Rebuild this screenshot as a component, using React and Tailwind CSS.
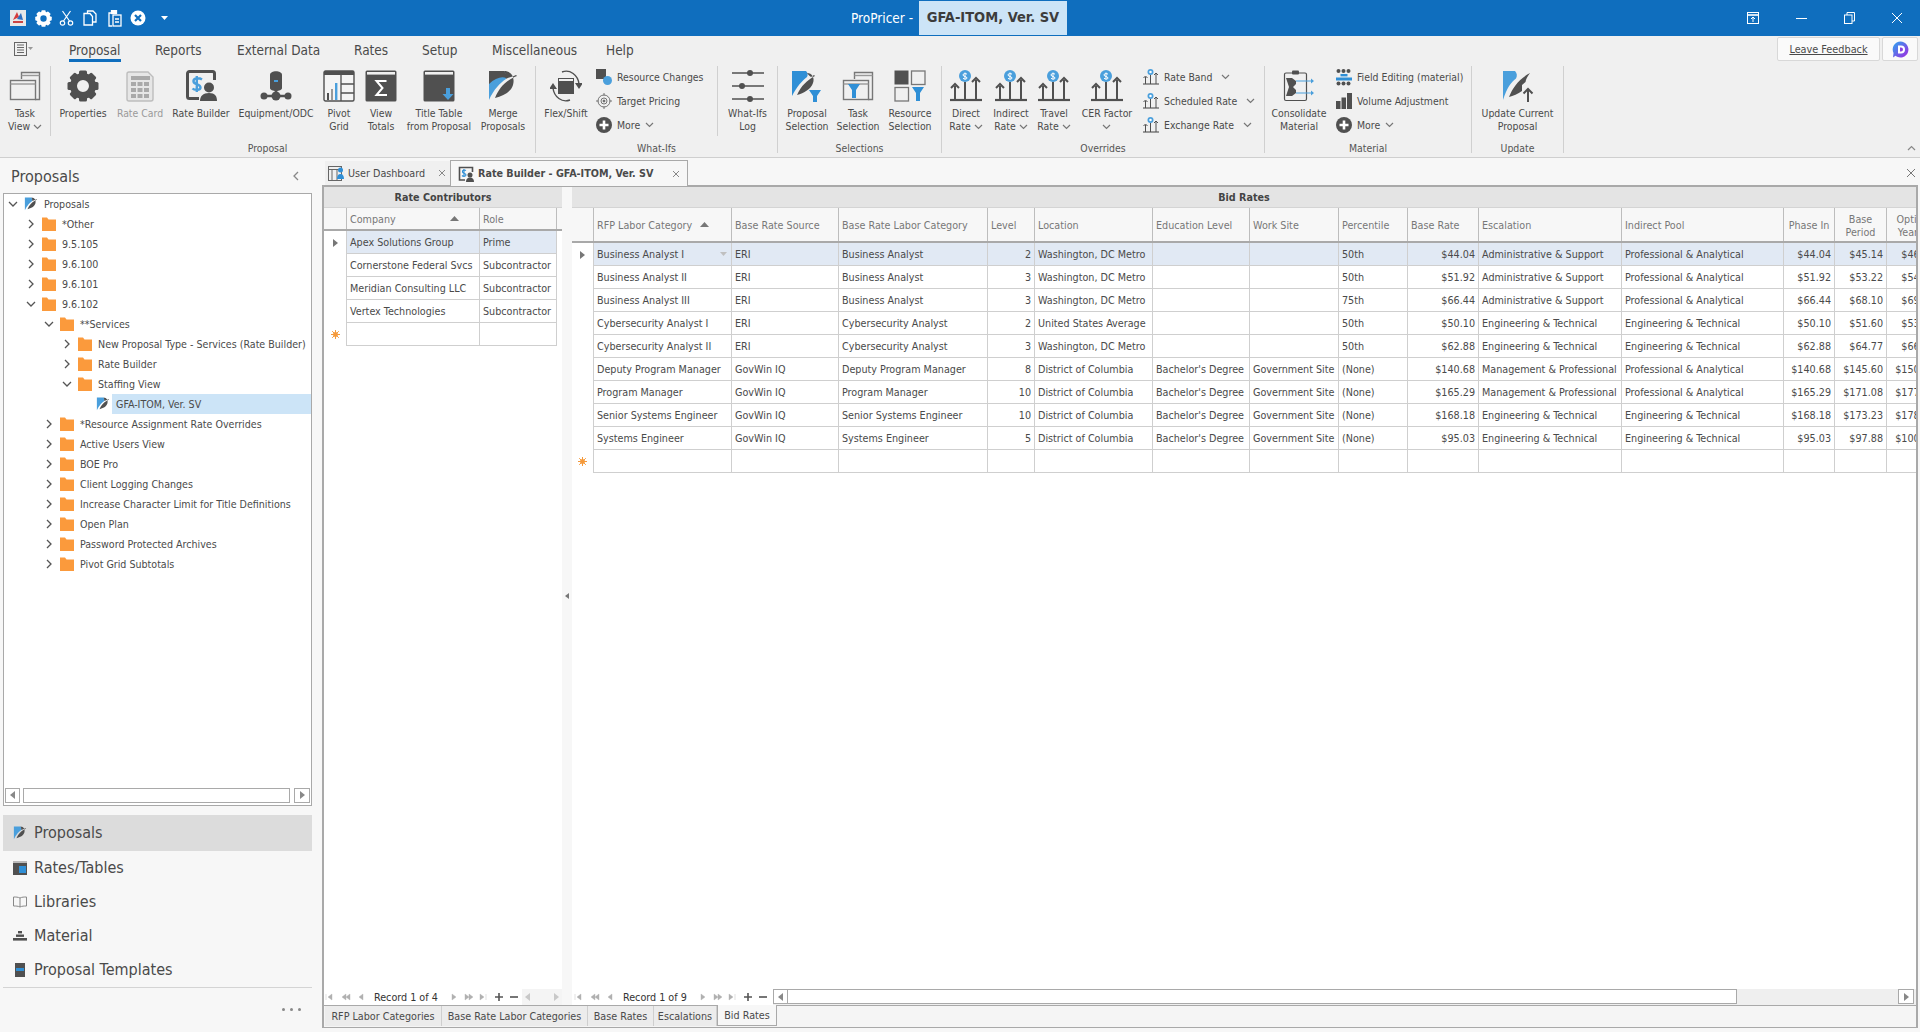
const DARK = "#505050";
const BLUE = "#4a9fdc";

function Gear({ size = 32, color = DARK }) {
  const teeth = [0, 45, 90, 135, 180, 225, 270, 315];
  return (
    <svg width={size} height={size} viewBox="0 0 32 32">
      {teeth.map((a) => (
        <rect key={a} x="12" y="0.5" width="8" height="7" rx="1.5" fill={color} transform={`rotate(${a} 16 16)`} />
      ))}
      <circle cx="16" cy="16" r="9.5" fill="none" stroke={color} strokeWidth="7" />
    </svg>
  );
}

function Feather({ size = 32, dark = false }) {
  return (
    <svg width={size} height={size} viewBox="0 0 32 32">
      <path d="M2 1H17C19 4 20 6 19 9C13 13 7 19 2 30Z" fill={BLUE} />
      {dark && <path d="M2 1H17C19 4 20 5 19 8C15 6 8 8 2 14Z" fill={DARK} />}
      <path d="M8 28C12 18 18 11 30 6L29 5C22 8 20 8 19 9C19 4 18 3 17 1C25 1 28 8 26 15C24 22 16 26 8 28Z" fill={DARK} />
    </svg>
  );
}

function Funnel({ x = 20, y = 18 }) {
  return <path d={`M${x} ${y}h12l-4 6v8h-4v-8z`} fill="#2f8fd6" />;
}

function Windows({ children }) {
  return (
    <svg width="32" height="32" viewBox="0 0 32 32">
      <path d="M12.5 9V2.5H30.5V29.5H26" fill="none" stroke="#777" strokeWidth="1.4" />
      <path d="M12.5 5.5H30.5" stroke="#999" strokeWidth="1.4" />
      <rect x="1.5" y="10.5" width="25" height="19" fill="#f0f0f0" stroke="#777" strokeWidth="1.4" />
      <path d="M1.5 14H26.5" stroke="#999" strokeWidth="1.4" />
      {children}
    </svg>
  );
}

function RateCard() {
  const cells = [];
  for (let r = 0; r < 3; r++) for (let c = 0; c < 3; c++) cells.push(<rect key={`${r}${c}`} x={7 + c * 6.5} y={12 + r * 6} width="5" height="4" fill="#a9a9a9" />);
  return (
    <svg width="32" height="32" viewBox="0 0 32 32">
      <path d="M3 4a2 2 0 0 1 2-2H24l5 5V29a2 2 0 0 1-2 2H5a2 2 0 0 1-2-2Z" fill="#e6e6e6" stroke="#bdbdbd" strokeWidth="1.4" />
      <rect x="7" y="6" width="19" height="4" fill="#a9a9a9" />
      {cells}
    </svg>
  );
}

function RateBuilder() {
  return (
    <svg width="32" height="32" viewBox="0 0 32 32">
      <path d="M14 28.5H4.5a2 2 0 0 1-2-2V3.5a2 2 0 0 1 2-2H27.5a2 2 0 0 1 2 2V10" fill="none" stroke={DARK} strokeWidth="3" />
      <path d="M17 9.5C14 7.5 8 8 8.5 11.5C9 15 15.5 14 15.5 17.5C15.5 20.5 9.5 20.5 7.5 18.5M11.8 6V22" fill="none" stroke={BLUE} strokeWidth="2.4" />
      <circle cx="24" cy="17.5" r="5" fill={DARK} />
      <path d="M15 31c0-5 3-8 9-8s8 3 8 8z" fill={DARK} />
    </svg>
  );
}

function Equipment() {
  return (
    <svg width="32" height="32" viewBox="0 0 32 32">
      <path d="M10 5c0-5 12-5 12 0V18c0 4-12 4-12 0Z" fill={DARK} />
      <rect x="14" y="10" width="4" height="2" fill={BLUE} />
      <path d="M16 20V26M4 26H28" stroke={DARK} strokeWidth="2.4" />
      <circle cx="4" cy="26" r="3.5" fill={DARK} />
      <circle cx="16" cy="26" r="4.5" fill={DARK} />
      <circle cx="28" cy="26" r="3.5" fill={DARK} />
    </svg>
  );
}

function Pivot() {
  return (
    <svg width="32" height="32" viewBox="0 0 32 32">
      <rect x="1" y="1" width="30" height="30" rx="1.5" fill="#f4f4f4" stroke={DARK} strokeWidth="1.4" />
      <rect x="1" y="1" width="30" height="4" fill={DARK} />
      <path d="M18 5V31M18 14H31M18 23H31" stroke={DARK} strokeWidth="1.3" />
      <rect x="4" y="23" width="2" height="7" fill={DARK} />
      <rect x="8" y="19" width="2" height="11" fill="#999" />
      <rect x="12" y="13" width="2.4" height="17" fill={BLUE} />
    </svg>
  );
}

function Sigma() {
  return (
    <svg width="32" height="32" viewBox="0 0 32 32">
      <rect x="0.5" y="0.5" width="31" height="31" rx="1.5" fill={DARK} />
      <rect x="2" y="2" width="28" height="2.6" fill="#f0f0f0" />
      <path d="M21.5 11H11.5L17.5 18L11.5 25H22" fill="none" stroke="#fff" strokeWidth="2" />
    </svg>
  );
}

function TitleTable() {
  return (
    <svg width="32" height="32" viewBox="0 0 32 32">
      <rect x="0.5" y="0.5" width="31" height="31" rx="1.5" fill={DARK} />
      <rect x="2" y="2" width="28" height="2.6" fill="#f0f0f0" />
      <path d="M23 18h4v6h3.5l-5.5 6l-5.5-6H23z" fill={BLUE} />
    </svg>
  );
}

function FlexShift() {
  return (
    <svg width="32" height="32" viewBox="0 0 32 32">
      <rect x="8" y="8" width="16" height="16" fill={DARK} />
      <rect x="9" y="9" width="14" height="2" fill="#f0f0f0" />
      <path d="M12 2C20 -1 28 5 29 14M20 30C12 33 4 27 3 18" fill="none" stroke={DARK} strokeWidth="1.4" />
      <path d="M29 19l-4-6h8zM3 13l4 6h-8z" fill={DARK} />
    </svg>
  );
}

function SliderLog() {
  return (
    <svg width="32" height="32" viewBox="0 0 32 32">
      <path d="M0 3H32M0 16H32M0 29H32" stroke={DARK} strokeWidth="1.6" />
      <circle cx="18" cy="3" r="3" fill={DARK} />
      <circle cx="10" cy="16" r="3" fill={DARK} />
      <circle cx="18" cy="29" r="3" fill={DARK} />
    </svg>
  );
}

function FeatherFunnel() {
  return (
    <svg width="32" height="32" viewBox="0 0 32 32">
      <path d="M1 1H15C17 3 17 5 16 7C11 11 6 16 1 26Z" fill="#2f8fd6" />
      <path d="M6 25C10 16 16 10 24 6L23 5L20 7C18 6 17 4 16 3C21 3 24 8 22 13C20 19 13 23 6 25Z" fill={DARK} />
      <Funnel x={18} y={20} />
    </svg>
  );
}

function ResourceSel() {
  return (
    <svg width="32" height="32" viewBox="0 0 32 32">
      <rect x="0.5" y="0.5" width="14" height="14" fill={DARK} />
      <rect x="17.5" y="1" width="13.5" height="13.5" fill="none" stroke="#777" strokeWidth="1.3" />
      <rect x="1" y="17.5" width="13.5" height="13.5" fill="none" stroke="#777" strokeWidth="1.3" />
      <Funnel x={18} y={17} />
    </svg>
  );
}

function RateArrows({ size = 32, withDollar = true }) {
  return (
    <svg width={size} height={size} viewBox="0 0 32 32">
      <path d="M5 30V16M15 30V12M26 30V10" stroke={DARK} strokeWidth="2" />
      <path d="M1 18l4-4l4 4M22 12l4-4l4 4" fill="none" stroke={DARK} strokeWidth="2" />
      <path d="M0 30H32" stroke={DARK} strokeWidth="2.2" />
      <circle cx="15" cy="6" r="6" fill={BLUE} />
      {withDollar ? (
        <path d="M17 4.2C15.5 3 13 3.4 13 5C13 6.8 17 6.2 17 8C17 9.4 14.5 9.5 13 8.3M15 2.5V9.5" fill="none" stroke="#fff" strokeWidth="1" />
      ) : (
        <circle cx="15" cy="6" r="2.5" fill="#fff" />
      )}
    </svg>
  );
}

function Consolidate() {
  return (
    <svg width="32" height="32" viewBox="0 0 32 32">
      <path d="M10 3H3a1.5 1.5 0 0 0-1.5 1.5V29a1.5 1.5 0 0 0 1.5 1.5H22a1.5 1.5 0 0 0 1.5-1.5V4.5A1.5 1.5 0 0 0 22 3H15" fill="none" stroke={DARK} strokeWidth="1.2" />
      <rect x="9" y="0.5" width="7" height="4" rx="1" fill={DARK} />
      <path d="M3 8H9L13 11V14L10 17L13 20V23L9 26H3L6 17Z" fill={DARK} />
      <path d="M13 11H30M13 23H30" stroke={BLUE} strokeWidth="1.2" />
      <path d="M28 8.5l3 2.5l-3 2.5zM28 20.5l3 2.5l-3 2.5z" fill={BLUE} />
    </svg>
  );
}

function UpdateFeather() {
  return (
    <svg width="32" height="32" viewBox="0 0 32 32">
      <path d="M1 1H13C15 3 15.5 6 14 8.5C9 12 5 18 1 30Z" fill={BLUE} />
      <path d="M7 27C11 17 17 9 28 3C25 7 24 9 23.5 12L20 15V21C16 24 11 26 7 27Z" fill={DARK} />
      <path d="M26 32V19M21.5 23.5L26 19L30.5 23.5" fill="none" stroke={DARK} strokeWidth="2" />
    </svg>
  );
}

function BlockSquare() {
  return (
    <svg width="16" height="16" viewBox="0 0 16 16">
      <rect x="0" y="0" width="10" height="10" fill={DARK} />
      <circle cx="11.5" cy="11.5" r="4.5" fill={BLUE} />
    </svg>
  );
}

function TargetIcon() {
  return (
    <svg width="16" height="16" viewBox="0 0 16 16" fill="none" stroke="#666" strokeWidth="0.9">
      <circle cx="8" cy="8" r="6" />
      <circle cx="8" cy="8" r="3" />
      <circle cx="8" cy="8" r="1" fill="#666" />
      <path d="M8 0V2.5M8 13.5V16M0 8H2.5M13.5 8H16" />
    </svg>
  );
}

function MoreIcon() {
  return (
    <svg width="16" height="16" viewBox="0 0 16 16">
      <circle cx="8" cy="8" r="8" fill={DARK} />
      <path d="M8 3.5V12.5M3.5 8H12.5" stroke="#fff" strokeWidth="2.6" />
    </svg>
  );
}

function FieldEdit() {
  const dots = [1.5, 6.5, 11.5].flatMap((x) => [
    <circle key={`a${x}`} cx={x + 1} cy="2" r="2" fill={DARK} />,
    <circle key={`b${x}`} cx={x + 1} cy="14.5" r="2" fill={DARK} />,
  ]);
  return (
    <svg width="16" height="17" viewBox="0 0 16 17">
      {dots}
      <rect x="4.5" y="5" width="7" height="2.4" fill="#2f8fd6" />
      <rect x="0" y="8.5" width="16" height="3" fill="#2f8fd6" />
    </svg>
  );
}

function VolumeIcon() {
  return (
    <svg width="16" height="16" viewBox="0 0 16 16" fill={DARK}>
      <rect x="0" y="8" width="4.5" height="8" />
      <rect x="5.5" y="4.5" width="4.5" height="11.5" />
      <rect x="11" y="0" width="5" height="16" />
    </svg>
  );
}

function Caret({ className = "" }) {
  return (
    <svg width="9" height="6" viewBox="0 0 9 6" className={className}>
      <path d="M1 1l3.5 3.5L8 1" fill="none" stroke="#777" strokeWidth="1.2" />
    </svg>
  );
}

function BigButton({ w, icon, lines, caret }) {
  return (
    <div className={`${w} flex shrink-0 flex-col items-center pt-[8px]`}>
      <div className="flex h-[32px] items-center justify-center">{icon}</div>
      <div className="mt-[5px] text-center leading-[13px] whitespace-nowrap">
        {lines.map((l, i) => (
          <div key={l || i} className="flex h-[13px] items-center justify-center gap-[3px]">
            {l}
            {caret && i === lines.length - 1 && <Caret />}
          </div>
        ))}
      </div>
    </div>
  );
}

function SmallCol({ items, w }) {
  return (
    <div className={`${w} flex shrink-0 flex-col gap-[8px] pt-[7px]`}>
      {items.map((it) => (
        <div key={it.label} className="flex h-[16px] items-center whitespace-nowrap">
          <div className="flex w-[16px] shrink-0 items-center justify-center">{it.icon}</div>
          <span className={`${it.gap} pt-[2px]`}>{it.label}</span>
          {it.caret && <Caret className={it.caretGap} />}
        </div>
      ))}
    </div>
  );
}

function Group({ w, label, children }) {
  return (
    <div className={`${w} flex h-full shrink-0 flex-col`}>
      <div className="flex h-[80px] items-start">{children}</div>
      <div className="flex h-[14px] items-center justify-center text-[#555]">{label}</div>
    </div>
  );
}

const Sep = ({ short }) => <div className={`${short ? "h-[70px]" : "h-[87px]"} mt-[4px] w-px shrink-0 bg-[#d0d0d0]`} />;

const ribbonTabs = [
  ["Proposal", "w-[86px]"],
  ["Reports", "w-[82px]"],
  ["External Data", "w-[117px]"],
  ["Rates", "w-[68px]"],
  ["Setup", "w-[70px]"],
  ["Miscellaneous", "w-[114px]"],
  ["Help", "w-[50px]"],
];

function TitleBar() {
  return (
    <div className="flex h-[36px] shrink-0 items-center bg-[#0f6ebe] text-white">
      <div className="flex w-[851px] shrink-0 items-center">
        <svg width="16" height="16" viewBox="0 0 16 16" className="ml-[10px]">
          <rect width="16" height="16" fill="#e8e8e8" />
          <path d="M3 10L7 2L9 7Z" fill="#d63a3a" />
          <path d="M7 9L11 3L13 10Z" fill="#2f6fc0" />
          <rect x="3" y="11" width="10" height="2" fill="#c44" />
        </svg>
        <div className="ml-[9px]"><Gear size={17} color="#fff" /></div>
        <svg width="15" height="16" viewBox="0 0 15 16" className="ml-[7px]" fill="none" stroke="#fff" strokeWidth="1.2">
          <circle cx="3.5" cy="13" r="2.2" />
          <circle cx="11.5" cy="13" r="2.2" />
          <path d="M4.5 11L11.5 1M10.5 11L3.5 1" />
        </svg>
        <svg width="14" height="16" viewBox="0 0 14 16" className="ml-[9px]" fill="none" stroke="#fff" strokeWidth="1.3">
          <path d="M4.5 3V1H10l3 3V12H10" />
          <path d="M1 3.5H7l2.5 3V15H1Z" />
        </svg>
        <svg width="14" height="17" viewBox="0 0 14 17" className="ml-[11px]" fill="none" stroke="#fff" strokeWidth="1.3">
          <path d="M4 3H1V16H4" />
          <rect x="5" y="5" width="8" height="11" />
          <rect x="3.5" y="0.5" width="5" height="3" fill="#fff" />
          <path d="M7 9H11M7 12H11" />
        </svg>
        <svg width="16" height="16" viewBox="0 0 16 16" className="ml-[8px]">
          <circle cx="8" cy="8" r="7.5" fill="#fff" />
          <path d="M5 5L11 11M11 5L5 11" stroke="#0f6ebe" strokeWidth="2.2" />
        </svg>
        <svg width="7" height="4" viewBox="0 0 7 4" className="ml-[15px]"><path d="M0 0H7L3.5 4Z" fill="#fff" /></svg>
      </div>
      <span className="w-[68px] shrink-0 text-[13.5px]">ProPricer -</span>
      <div className="mt-[-1px] flex h-[34px] w-[148px] shrink-0 items-center justify-center whitespace-nowrap bg-[#cce4f7] text-[14.5px] font-bold text-[#3c3c3c]">
        GFA-ITOM, Ver. SV
      </div>
      <div className="ml-auto flex items-center">
        <div className="flex w-[48px] justify-center">
          <svg width="12" height="12" viewBox="0 0 12 12" fill="none" stroke="#fff" strokeWidth="1">
            <rect x="0.5" y="0.5" width="11" height="11" />
            <path d="M0.5 3H11.5" strokeWidth="1.6" />
            <path d="M6 10V5M4 7l2-2l2 2" />
          </svg>
        </div>
        <div className="flex w-[48px] justify-center"><div className="h-px w-[11px] bg-white" /></div>
        <div className="flex w-[48px] justify-center">
          <svg width="11" height="12" viewBox="0 0 11 12" fill="none" stroke="#fff" strokeWidth="1">
            <rect x="0.5" y="3" width="7.5" height="8.5" />
            <path d="M3 3V0.5H10.5V9H8" />
          </svg>
        </div>
        <div className="flex w-[47px] justify-center">
          <svg width="12" height="12" viewBox="0 0 12 12" stroke="#fff" strokeWidth="1"><path d="M1 1L11 11M11 1L1 11" /></svg>
        </div>
      </div>
    </div>
  );
}

function Ribbon() {
  return (
    <div className="h-[122px] shrink-0 border-b border-[#cfcfcf] bg-[#f0f0f0] text-[10.4px] text-[#4a4a4a]">
      <div className="flex h-[26px] items-center">
        <div className="flex w-[69px] shrink-0 justify-center pr-[22px]">
          <svg width="19" height="14" viewBox="0 0 19 14" fill="none" stroke="#666">
            <rect x="0.5" y="0.5" width="12" height="13" />
            <path d="M3 3H10M3 5.5H10M3 8H10M3 10.5H10" />
            <path d="M14 5H19L16.5 8Z" fill="#999" stroke="none" />
          </svg>
        </div>
        {ribbonTabs.map(([t, w], i) => (
          <div key={t} className={`${w} relative flex h-[26px] shrink-0 items-center pt-[2px] text-[13.5px] text-[#4a4a4a]`}>
            {t}
            {i === 0 && <div className="absolute bottom-0 left-0 h-[3px] w-[52px] bg-[#0f6ebe]" />}
          </div>
        ))}
        <div className="ml-auto mr-[2px] flex items-center gap-[2px]">
          <div className="flex h-[24px] w-[103px] items-center justify-center rounded-[2px] border border-[#d8d8d8] bg-[#fafafa] pt-[2px] text-[10.8px] underline">
            Leave Feedback
          </div>
          <div className="flex h-[24px] w-[36px] items-center justify-center rounded-[2px] border border-[#d8d8d8] bg-[#fafafa]">
            <svg width="17" height="17" viewBox="0 0 17 17">
              <defs>
                <linearGradient id="dlogo" x1="0" y1="0" x2="1" y2="1">
                  <stop offset="0" stopColor="#2aa8f0" />
                  <stop offset="1" stopColor="#a326e0" />
                </linearGradient>
              </defs>
              <path d="M8.5 0.5a8 8 0 1 1-5 14.3L1 16.5L1.5 12a8 8 0 0 1 7-11.5Z" fill="url(#dlogo)" />
              <path d="M6 4.5H9a4 4 0 0 1 0 8H6Z" fill="#fff" />
              <path d="M8 6.5H9a2 2 0 0 1 0 4H8Z" fill="#8a3fe0" />
            </svg>
          </div>
        </div>
      </div>
      <div className="flex h-[95px]">
        <Group w="w-[535px]" label="Proposal">
          <BigButton w="w-[50px]" icon={<Windows />} lines={["Task", "View"]} caret />
          <Sep short />
          <BigButton w="w-[64px]" icon={<Gear />} lines={["Properties"]} />
          <BigButton w="w-[50px]" icon={<RateCard />} lines={[<span key="r" className="text-[#9a9a9a]">Rate Card</span>]} />
          <BigButton w="w-[72px]" icon={<RateBuilder />} lines={["Rate Builder"]} />
          <BigButton w="w-[78px]" icon={<Equipment />} lines={["Equipment/ODC"]} />
          <BigButton w="w-[48px]" icon={<Pivot />} lines={["Pivot", "Grid"]} />
          <BigButton w="w-[36px]" icon={<Sigma />} lines={["View", "Totals"]} />
          <BigButton w="w-[80px]" icon={<TitleTable />} lines={["Title Table", "from Proposal"]} />
          <BigButton w="w-[48px]" icon={<Feather dark />} lines={["Merge", "Proposals"]} />
        </Group>
        <Sep />
        <Group w="w-[241px]" label="What-Ifs">
          <BigButton w="w-[60px]" icon={<FlexShift />} lines={["Flex/Shift"]} />
          <SmallCol
            w="w-[121px]"
            items={[
              { label: "Resource Changes", icon: <BlockSquare />, gap: "ml-[5px]" },
              { label: "Target Pricing", icon: <TargetIcon />, gap: "ml-[5px]" },
              { label: "More", icon: <MoreIcon />, gap: "ml-[5px]", caret: true, caretGap: "ml-[5px]" },
            ]}
          />
          <Sep short />
          <BigButton w="w-[59px]" icon={<SliderLog />} lines={["What-Ifs", "Log"]} />
        </Group>
        <Sep />
        <Group w="w-[163px]" label="Selections">
          <BigButton w="w-[58px]" icon={<FeatherFunnel />} lines={["Proposal", "Selection"]} />
          <BigButton w="w-[44px]" icon={<Windows><Funnel x={6} y={14} /></Windows>} lines={["Task", "Selection"]} />
          <BigButton w="w-[60px]" icon={<ResourceSel />} lines={["Resource", "Selection"]} />
        </Group>
        <Sep />
        <Group w="w-[322px]" label="Overrides">
          <BigButton w="w-[48px]" icon={<RateArrows />} lines={["Direct", "Rate"]} caret />
          <BigButton w="w-[42px]" icon={<RateArrows />} lines={["Indirect", "Rate"]} caret />
          <BigButton w="w-[44px]" icon={<RateArrows />} lines={["Travel", "Rate"]} caret />
          <BigButton w="w-[62px]" icon={<RateArrows />} lines={["CER Factor", ""]} caret />
          <SmallCol
            w="w-[124px] ml-[5px]"
            items={[
              { label: "Rate Band", icon: <RateArrows size={16} withDollar={false} />, gap: "ml-[5px]", caret: true, caretGap: "ml-[9px]" },
              { label: "Scheduled Rate", icon: <RateArrows size={16} withDollar={false} />, gap: "ml-[5px]", caret: true, caretGap: "ml-[9px]" },
              { label: "Exchange Rate", icon: <RateArrows size={16} withDollar={false} />, gap: "ml-[5px]", caret: true, caretGap: "ml-[9px]" },
            ]}
          />
        </Group>
        <Sep />
        <Group w="w-[206px]" label="Material">
          <BigButton w="w-[68px]" icon={<Consolidate />} lines={["Consolidate", "Material"]} />
          <SmallCol
            w="w-[130px] ml-[3px]"
            items={[
              { label: "Field Editing (material)", icon: <FieldEdit />, gap: "ml-[5px]" },
              { label: "Volume Adjustment", icon: <VolumeIcon />, gap: "ml-[5px]" },
              { label: "More", icon: <MoreIcon />, gap: "ml-[5px]", caret: true, caretGap: "ml-[5px]" },
            ]}
          />
        </Group>
        <Sep />
        <Group w="w-[91px]" label="Update">
          <BigButton w="w-[91px]" icon={<UpdateFeather />} lines={["Update Current", "Proposal"]} />
        </Group>
        <Sep />
        <div className="ml-auto mr-[4px] mt-[83px]">
          <svg width="9" height="6" viewBox="0 0 9 6"><path d="M1 5l3.5-3.5L8 5" fill="none" stroke="#888" strokeWidth="1.2" /></svg>
        </div>
      </div>
    </div>
  );
}

const Folder = () => (
  <svg width="14" height="14" viewBox="0 0 14 14" className="shrink-0">
    <path d="M0 0.5H5L6.5 2.5H14V14H0Z" fill="#fb9a3c" />
  </svg>
);

const treeRows = [
  { l: 0, t: "Proposals", open: true, leaf: true },
  { l: 1, t: "*Other" },
  { l: 1, t: "9.5.105" },
  { l: 1, t: "9.6.100" },
  { l: 1, t: "9.6.101" },
  { l: 1, t: "9.6.102", open: true },
  { l: 2, t: "**Services", open: true },
  { l: 3, t: "New Proposal Type - Services (Rate Builder)" },
  { l: 3, t: "Rate Builder" },
  { l: 3, t: "Staffing View", open: true },
  { l: 4, t: "GFA-ITOM, Ver. SV", leaf: true, none: true, sel: true },
  { l: 2, t: "*Resource Assignment Rate Overrides" },
  { l: 2, t: "Active Users View" },
  { l: 2, t: "BOE Pro" },
  { l: 2, t: "Client Logging Changes" },
  { l: 2, t: "Increase Character Limit for Title Definitions" },
  { l: 2, t: "Open Plan" },
  { l: 2, t: "Password Protected Archives" },
  { l: 2, t: "Pivot Grid Subtotals" },
];

const indent = ["pl-[1px]", "pl-[19px]", "pl-[37px]", "pl-[55px]", "pl-[73px]"];

function Tree() {
  return (
    <div className="flex-1 overflow-hidden">
      {treeRows.map((r) => (
        <div key={r.t + r.l} className={`${indent[r.l]} flex h-[20px] items-center`}>
          <div className="flex w-[16px] shrink-0 justify-center">
            {!r.none && (
              <svg width="10" height="10" viewBox="0 0 10 10" fill="none" stroke="#555" strokeWidth="1.3">
                {r.open ? <path d="M1 3l4 4l4-4" /> : <path d="M3 1l4 4l-4 4" />}
              </svg>
            )}
          </div>
          <div className="ml-[3px] flex w-[14px] shrink-0">{r.leaf ? <Feather size={14} /> : <Folder />}</div>
          <div className={`ml-[2px] flex h-[20px] flex-1 items-center whitespace-nowrap pl-[4px] pt-[2px] ${r.sel ? "bg-[#cce4f7]" : ""}`}>{r.t}</div>
        </div>
      ))}
    </div>
  );
}

const TriBtn = ({ dir, className }) => (
  <div className={`flex items-center justify-center border border-[#a9a9a9] bg-white ${className}`}>
    <svg width="5" height="8" viewBox="0 0 5 8"><path d={dir === "l" ? "M5 0V8L0 4Z" : "M0 0V8L5 4Z"} fill="#888" /></svg>
  </div>
);

const navItems = [
  { t: "Proposals", active: true, icon: <Feather size={14} /> },
  {
    t: "Rates/Tables",
    icon: (
      <svg width="14" height="14" viewBox="0 0 14 14">
        <rect width="14" height="14" fill={DARK} />
        <rect y="0" width="14" height="2" fill="#bbb" />
        <rect x="6" y="5" width="7" height="7" fill="#2f8fd6" />
      </svg>
    ),
  },
  {
    t: "Libraries",
    icon: (
      <svg width="14" height="12" viewBox="0 0 14 12" fill="#f7f7f7" stroke="#888">
        <path d="M7 2C5 1 3 1 0.5 1V10C3 10 5 10 7 11C9 10 11 10 13.5 10V1C11 1 9 1 7 2ZM7 2V11" />
      </svg>
    ),
  },
  {
    t: "Material",
    icon: (
      <svg width="14" height="10" viewBox="0 0 14 10" fill={DARK}>
        <rect x="5" y="0" width="4" height="2.4" />
        <rect x="3" y="3.5" width="8" height="2.4" />
        <rect x="0" y="7" width="14" height="2.6" />
      </svg>
    ),
  },
  {
    t: "Proposal Templates",
    icon: (
      <svg width="14" height="14" viewBox="0 0 14 14">
        <path d="M2 0H12V14H2Z" fill={DARK} />
        <rect x="3" y="5" width="8" height="3" fill="#2f8fd6" />
      </svg>
    ),
  },
];

function LeftPanel() {
  return (
    <div className="flex w-[322px] shrink-0 flex-col px-[3px] text-[10.6px] text-[#4a4a4a]">
      <div className="flex h-[35px] shrink-0 items-center justify-between pl-[8px] pr-[19px]">
        <span className="pt-[2px] text-[16px]">Proposals</span>
        <svg width="8" height="10" viewBox="0 0 8 10"><path d="M6 1L2 5l4 4" fill="none" stroke="#888" strokeWidth="1.3" /></svg>
      </div>
      <div className="flex h-[613px] w-[309px] shrink-0 flex-col border border-[#a9a9a9] bg-white">
        <Tree />
        <div className="flex h-[18px] shrink-0 items-center gap-[3px] px-[1px] pb-[2px]">
          <TriBtn dir="l" className="h-[15px] w-[15px]" />
          <div className="h-[15px] flex-1 border border-[#a9a9a9] bg-white" />
          <TriBtn dir="r" className="ml-[1px] h-[15px] w-[16px]" />
        </div>
      </div>
      <div className="mt-[9px] w-[309px]">
        {navItems.map((n, i) => (
          <div key={n.t} className={`flex items-center pl-[10px] text-[16px] ${i === 0 ? "h-[36px] bg-[#dcdcdc]" : "h-[34px]"}`}>
            <div className="flex w-[21px] shrink-0 items-center">{n.icon}</div>
            {n.t}
          </div>
        ))}
      </div>
      <div className="w-[309px] border-t border-[#d4d4d4]">
        <div className="flex justify-end gap-[5px] pr-[11px] pt-[20px]">
          <i className="h-[3px] w-[3px] rounded-full bg-[#888]" />
          <i className="h-[3px] w-[3px] rounded-full bg-[#888]" />
          <i className="h-[3px] w-[3px] rounded-full bg-[#888]" />
        </div>
      </div>
    </div>
  );
}

const leftCols = ["w-[133px]", "w-[77px]"];
const leftRows = [
  ["Apex Solutions Group", "Prime"],
  ["Cornerstone Federal Svcs", "Subcontractor"],
  ["Meridian Consulting LLC", "Subcontractor"],
  ["Vertex Technologies", "Subcontractor"],
  ["", ""],
];

const rightCols = [
  { w: "w-[138px]", h: "RFP Labor Category", sort: true },
  { w: "w-[107px]", h: "Base Rate Source" },
  { w: "w-[149px]", h: "Base Rate Labor Category" },
  { w: "w-[47px]", h: "Level", num: true },
  { w: "w-[118px]", h: "Location" },
  { w: "w-[97px]", h: "Education Level" },
  { w: "w-[89px]", h: "Work Site" },
  { w: "w-[69px]", h: "Percentile" },
  { w: "w-[71px]", h: "Base Rate", num: true },
  { w: "w-[143px]", h: "Escalation" },
  { w: "w-[162px]", h: "Indirect Pool" },
  { w: "w-[51px]", h: "Phase In", num: true, hc: true },
  { w: "w-[52px]", h: "Base Period", num: true, hc: true },
  { w: "w-[52px]", h: "Option Year 1", num: true, hc: true },
];

const ADM = "Administrative & Support";
const PA = "Professional & Analytical";
const ET = "Engineering & Technical";
const MP = "Management & Professional";
const BD = "Bachelor's Degree";
const GS = "Government Site";
const DC = "District of Columbia";
const DCM = "Washington, DC Metro";

const rightRows = [
  ["Business Analyst I", "ERI", "Business Analyst", "2", DCM, "", "", "50th", "$44.04", ADM, PA, "$44.04", "$45.14", "$46.27"],
  ["Business Analyst II", "ERI", "Business Analyst", "3", DCM, "", "", "50th", "$51.92", ADM, PA, "$51.92", "$53.22", "$54.55"],
  ["Business Analyst III", "ERI", "Business Analyst", "3", DCM, "", "", "75th", "$66.44", ADM, PA, "$66.44", "$68.10", "$69.80"],
  ["Cybersecurity Analyst I", "ERI", "Cybersecurity Analyst", "2", "United States Average", "", "", "50th", "$50.10", ET, ET, "$50.10", "$51.60", "$53.15"],
  ["Cybersecurity Analyst II", "ERI", "Cybersecurity Analyst", "3", DCM, "", "", "50th", "$62.88", ET, ET, "$62.88", "$64.77", "$66.71"],
  ["Deputy Program Manager", "GovWin IQ", "Deputy Program Manager", "8", DC, BD, GS, "(None)", "$140.68", MP, PA, "$140.68", "$145.60", "$150.70"],
  ["Program Manager", "GovWin IQ", "Program Manager", "10", DC, BD, GS, "(None)", "$165.29", MP, PA, "$165.29", "$171.08", "$177.07"],
  ["Senior Systems Engineer", "GovWin IQ", "Senior Systems Engineer", "10", DC, BD, GS, "(None)", "$168.18", ET, ET, "$168.18", "$173.23", "$178.43"],
  ["Systems Engineer", "GovWin IQ", "Systems Engineer", "5", DC, BD, GS, "(None)", "$95.03", ET, ET, "$95.03", "$97.88", "$100.82"],
  ["", "", "", "", "", "", "", "", "", "", "", "", "", ""],
];

const SortUp = ({ className }) => (
  <svg width="9" height="5" viewBox="0 0 9 5" className={className}><path d="M0 5L4.5 0L9 5Z" fill="#777" /></svg>
);

function RowMarker({ kind }) {
  if (kind === "cur")
    return <svg width="5" height="8" viewBox="0 0 5 8"><path d="M0 0V8L5 4Z" fill="#777" /></svg>;
  if (kind === "new")
    return (
      <svg width="9" height="9" viewBox="0 0 9 9" stroke="#f59a3c" strokeWidth="1">
        <path d="M4.5 0V9M0 4.5H9M1.2 1.2L7.8 7.8M7.8 1.2L1.2 7.8" />
        <circle cx="4.5" cy="4.5" r="2" fill="#f59a3c" />
      </svg>
    );
  return null;
}

function Cell({ w, sel, num, children, extra }) {
  return (
    <div className={`${w} flex h-full shrink-0 items-center overflow-hidden whitespace-nowrap border-r border-[#cfcfcf] px-[3px] pt-[2px] ${num ? "justify-end" : ""} ${sel ? "bg-[#e1e9f4]" : ""}`}>
      <span className="flex-none">{children}</span>
      {extra}
    </div>
  );
}

function LeftGrid() {
  return (
    <div className="flex-1">
      <div className="flex h-[23px] border-b-2 border-[#a9a9a9] bg-[#f7f7f7] text-[#777]">
        <div className="w-[23px] shrink-0 border-r border-[#bdbdbd]" />
        <div className={`${leftCols[0]} flex shrink-0 items-center justify-between border-r border-[#bdbdbd] pl-[3px] pr-[20px] pt-[3px]`}>
          Company
          <SortUp className="mb-[3px]" />
        </div>
        <div className={`${leftCols[1]} flex shrink-0 items-center border-r border-[#bdbdbd] pl-[3px] pt-[3px]`}>Role</div>
      </div>
      {leftRows.map((r, i) => (
        <div key={i} className="flex h-[23px]">
          <div className="flex w-[23px] shrink-0 items-center justify-center border-r border-[#cfcfcf]">
            <RowMarker kind={i === 0 ? "cur" : i === 4 ? "new" : null} />
          </div>
          <div className="flex border-b border-[#cfcfcf]">
            <Cell w={leftCols[0]} sel={i === 0}>{r[0]}</Cell>
            <Cell w={leftCols[1]} sel={i === 0}>{r[1]}</Cell>
          </div>
        </div>
      ))}
    </div>
  );
}

function RightGrid() {
  return (
    <div className="flex-1 overflow-hidden">
      <div className="flex h-[35px] border-b-2 border-[#a9a9a9] bg-[#f7f7f7] text-[#777]">
        <div className="w-[22px] shrink-0 border-r border-[#bdbdbd]" />
        {rightCols.map((c) => (
          <div key={c.h} className={`${c.w} flex shrink-0 items-center overflow-hidden border-r border-[#bdbdbd] px-[3px] pt-[2px] leading-[13px] ${c.hc ? "justify-center text-center" : ""}`}>
            <span>{c.h}</span>
            {c.sort && <SortUp className="ml-[8px] mb-[2px]" />}
          </div>
        ))}
      </div>
      {rightRows.map((r, i) => (
        <div key={i} className="flex h-[23px]">
          <div className="flex w-[22px] shrink-0 items-center justify-center border-r border-[#cfcfcf]">
            <RowMarker kind={i === 0 ? "cur" : i === 9 ? "new" : null} />
          </div>
          <div className="flex border-b border-[#cfcfcf]">
            {rightCols.map((c, j) => (
              <Cell
                key={c.h}
                w={c.w}
                sel={i === 0}
                num={c.num}
                extra={i === 0 && j === 0 ? <svg width="7" height="4" viewBox="0 0 7 4" className="ml-auto mr-[1px] mb-[2px]"><path d="M0 0H7L3.5 4Z" fill="#c0c0c0" /></svg> : null}
              >
                {r[j]}
              </Cell>
            ))}
          </div>
        </div>
      ))}
    </div>
  );
}

const glyphs = {
  first: "M1 1V7M7 1L3 4L7 7Z",
  prevPage: "M5 1L1 4L5 7ZM9 1L5 4L9 7Z",
  prev: "M6 1L2 4L6 7Z",
  next: "M3 1L7 4L3 7Z",
  nextPage: "M1 1L5 4L1 7ZM5 1L9 4L5 7Z",
  last: "M8 1V7M2 1L6 4L2 7Z",
};

const NavBtn = ({ g, w, ml }) => (
  <div className={`${w} ${ml || ""} flex h-full shrink-0 items-center justify-center`}>
    <svg width="10" height="8" viewBox="0 0 10 8"><path d={glyphs[g]} fill="#b0b0b0" stroke="#b0b0b0" strokeWidth="0.4" /></svg>
  </div>
);

function NavBar({ record, start, children }) {
  return (
    <div className="flex h-[16px] shrink-0 items-center bg-white">
      <NavBtn g="first" w="w-[16px]" ml={start} />
      <NavBtn g="prevPage" w="w-[16px]" />
      <NavBtn g="prev" w="w-[16px]" />
      <div className="ml-[4px] w-[66px] shrink-0 whitespace-nowrap pt-[2px] text-[#333]">{record}</div>
      <NavBtn g="next" w="w-[16px]" ml="ml-[6px]" />
      <NavBtn g="nextPage" w="w-[14px]" />
      <NavBtn g="last" w="w-[14px]" />
      <div className="ml-[2px] flex h-full w-[14px] shrink-0 items-center justify-center">
        <svg width="8" height="8" viewBox="0 0 10 10"><path d="M5 0V10M0 5H10" stroke="#555" strokeWidth="2" /></svg>
      </div>
      <div className="ml-px flex h-full w-[14px] shrink-0 items-center justify-center">
        <svg width="8" height="2" viewBox="0 0 10 2"><rect width="10" height="2" fill="#555" /></svg>
      </div>
      {children}
    </div>
  );
}

const bottomTabs = [
  ["RFP Labor Categories", "w-[117px]"],
  ["Base Rate Labor Categories", "w-[146px]"],
  ["Base Rates", "w-[66px]"],
  ["Escalations", "w-[63px]"],
];

function Workspace() {
  return (
    <div className="flex min-w-0 flex-1 flex-col text-[10.7px] text-[#4a4a4a]">
      <div className="flex h-[27px] shrink-0 items-end pl-[3px]">
        <div className="flex h-[24px] w-[125px] items-center bg-[#f0f0f0] pl-[3px]">
          <svg width="16" height="16" viewBox="0 0 16 16">
            <rect x="0.5" y="1.5" width="13" height="14" fill="none" stroke="#666" />
            <path d="M0.5 4.5H13M4 4.5V15M9 4.5V15" stroke="#666" />
            <circle cx="12.5" cy="5" r="2.5" fill="#2f8fd6" />
            <path d="M9 14c0-3 1-5 3.5-5s3.5 2 3.5 5z" fill="#2f8fd6" />
          </svg>
          <span className="ml-[4px] pt-[2px]">User Dashboard</span>
          <svg width="8" height="8" viewBox="0 0 8 8" className="ml-auto mr-[4px]" stroke="#888"><path d="M1 1L7 7M7 1L1 7" /></svg>
        </div>
        <div className="relative z-10 -mb-px flex h-[26px] w-[238px] items-center border border-b-0 border-[#a9a9a9] bg-[#f7f7f7] pl-[7px]">
          <svg width="16" height="16" viewBox="0 0 16 16">
            <path d="M7 14H1.5V1.5H14.5V6" fill="none" stroke={DARK} strokeWidth="1.6" />
            <path d="M8 4.5C6.5 3.5 4 4 4.5 6C5 8 8 7 8 9C8 10.5 5 10.5 4 9.5M6 3V11" fill="none" stroke="#2f8fd6" strokeWidth="1.1" />
            <circle cx="12" cy="9" r="2.5" fill={DARK} />
            <path d="M8 16c0-3 1.5-4.500 4-4.500s4 1.500 4 4.500z" fill={DARK} />
          </svg>
          <span className="ml-[4px] pt-[2px] font-bold">Rate Builder - GFA-ITOM, Ver. SV</span>
          <svg width="8" height="8" viewBox="0 0 8 8" className="ml-auto mr-[7px]" stroke="#888"><path d="M1 1L7 7M7 1L1 7" /></svg>
        </div>
        <svg width="10" height="10" viewBox="0 0 10 10" className="mb-[7px] ml-auto mr-[4px]" stroke="#777"><path d="M1 1L9 9M9 1L1 9" /></svg>
      </div>
      <div className="mb-[4px] mr-[2px] flex min-h-0 flex-1 flex-col border-2 border-b border-[#a9a9a9] bg-white">
        <div className="flex min-h-0 flex-1">
          <div className="flex w-[238px] shrink-0 flex-col">
            <div className="flex h-[21px] shrink-0 items-center justify-center border-b border-[#d4d4d4] bg-[#e4e4e4] pt-[2px] font-bold text-[#444]">Rate Contributors</div>
            <LeftGrid />
            <NavBar record="Record 1 of 4" start="-ml-[2px]">
              <div className="ml-[1px] flex h-full w-[41px] items-center justify-between bg-[#f4f4f4] px-[3px]">
                <svg width="5" height="8" viewBox="0 0 5 8"><path d="M5 0V8L0 4Z" fill="#c8c8c8" /></svg>
                <svg width="5" height="8" viewBox="0 0 5 8"><path d="M0 0V8L5 4Z" fill="#c8c8c8" /></svg>
              </div>
            </NavBar>
          </div>
          <div className="flex w-[10px] shrink-0 items-center justify-center bg-[#f7f7f7]">
            <svg width="4" height="6" viewBox="0 0 4 6"><path d="M4 0V6L0 3Z" fill="#777" /></svg>
          </div>
          <div className="flex min-w-0 flex-1 flex-col">
            <div className="flex h-[21px] shrink-0 items-center justify-center border-b border-[#d4d4d4] bg-[#e4e4e4] pt-[2px] font-bold text-[#444]">Bid Rates</div>
            <RightGrid />
            <NavBar record="Record 1 of 9" start="-ml-[1px]">
              <div className="ml-[3px] flex h-full min-w-0 flex-1 bg-[#efefef] pb-px pr-[2px]">
                <TriBtn dir="l" className="h-full w-[15px]" />
                <div className="h-full w-[949px] border border-l-0 border-[#a9a9a9] bg-white" />
                <TriBtn dir="r" className="ml-auto h-full w-[16px]" />
              </div>
            </NavBar>
          </div>
        </div>
        <div className="flex h-[22px] shrink-0 border-t border-[#a9a9a9] bg-[#f5f5f5] pl-[1px]">
          {bottomTabs.map(([t, w]) => (
            <div key={t} className={`${w} flex h-[20px] shrink-0 items-center justify-center border-r border-[#cfcfcf] bg-[#ececec] pt-[2px]`}>{t}</div>
          ))}
          <div className="-mt-px flex h-[21px] w-[60px] items-center justify-center border border-t-0 border-[#a9a9a9] bg-[#f7f7f7] pt-[2px]">Bid Rates</div>
        </div>
      </div>
    </div>
  );
}

export default function App() {
  return (
    <div className="flex h-[1032px] w-[1920px] flex-col overflow-hidden bg-[#f7f7f7] font-['DejaVu_Sans_Condensed','DejaVu_Sans',sans-serif]">
      <TitleBar />
      <Ribbon />
      <div className="flex min-h-0 flex-1">
        <LeftPanel />
        <Workspace />
      </div>
    </div>
  );
}
